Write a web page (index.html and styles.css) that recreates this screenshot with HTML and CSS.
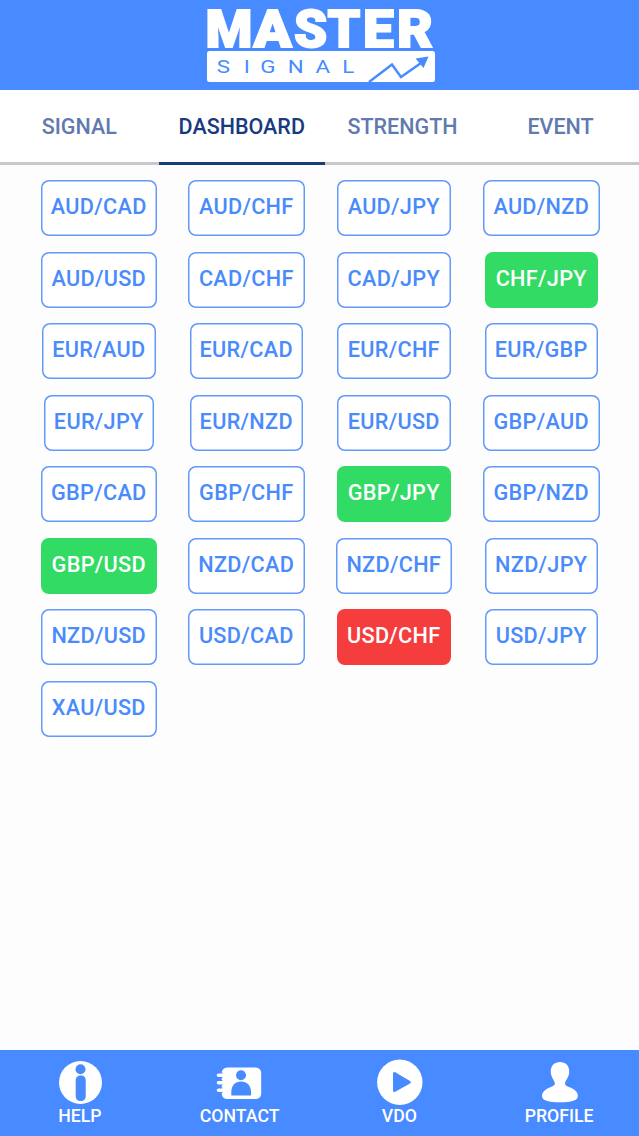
FILE: index.html
```html
<!DOCTYPE html>
<html lang="en">
<head>
    <meta charset="UTF-8">
    <meta name="viewport" content="width=device-width, initial-scale=1.0">
    <title>Master Signal</title>
    <link rel="stylesheet" href="styles.css">
</head>
<body>
    <!-- Header logo -->
    <div class="header">
        <svg class="logo" width="228" height="90" viewBox="0 -8 228 90">
            <rect x="0" y="43" width="228" height="31" rx="2.5" fill="#fff"/>
            <g class="logo-master">
                <text transform="translate(-1.500 38.500) scale(1.03 1)">M</text>
                <text transform="translate(46.500 38.500) scale(1.08 1)">A</text>
                <text transform="translate(87 38.500) scale(1.02 1)">S</text>
                <text transform="translate(120.500 38.500) scale(1 1)">T</text>
                <text transform="translate(156 38.500) scale(1.06 1)">E</text>
                <text transform="translate(190 38.500) scale(1.06 1)">R</text>
            </g>
            <text class="logo-signal" transform="translate(0 64.8) scale(1.24 1)" x="7.8 29.700 43 65.200 87.500 109">SIGNAL</text>
            <path d="M162 74 L185 56.500 L194 69 L214 55" fill="none" stroke="#488aff" stroke-width="2.4"/>
            <path d="M208.500 50.500 L221.500 48.500 L216.500 60 Z" fill="#488aff"/>
        </svg>
    </div>

    <!-- Tabs -->
    <div class="tabs">
        <div class="tab tab-signal">SIGNAL</div>
        <div class="tab tab-dashboard active">DASHBOARD</div>
        <div class="tab tab-strength">STRENGTH</div>
        <div class="tab tab-event">EVENT</div>
    </div>

    <!-- Currency pairs -->
    <div class="pairs">
        <div class="pair">AUD/CAD</div>
        <div class="pair">AUD/CHF</div>
        <div class="pair medium">AUD/JPY</div>
        <div class="pair">AUD/NZD</div>
        <div class="pair">AUD/USD</div>
        <div class="pair">CAD/CHF</div>
        <div class="pair medium">CAD/JPY</div>
        <div class="pair medium buy">CHF/JPY</div>
        <div class="pair medium">EUR/AUD</div>
        <div class="pair medium">EUR/CAD</div>
        <div class="pair medium">EUR/CHF</div>
        <div class="pair medium">EUR/GBP</div>
        <div class="pair small">EUR/JPY</div>
        <div class="pair medium">EUR/NZD</div>
        <div class="pair medium">EUR/USD</div>
        <div class="pair">GBP/AUD</div>
        <div class="pair">GBP/CAD</div>
        <div class="pair">GBP/CHF</div>
        <div class="pair medium buy">GBP/JPY</div>
        <div class="pair">GBP/NZD</div>
        <div class="pair buy">GBP/USD</div>
        <div class="pair">NZD/CAD</div>
        <div class="pair">NZD/CHF</div>
        <div class="pair medium">NZD/JPY</div>
        <div class="pair">NZD/USD</div>
        <div class="pair">USD/CAD</div>
        <div class="pair medium sell">USD/CHF</div>
        <div class="pair medium">USD/JPY</div>
        <div class="pair">XAU/USD</div>
    </div>

    <!-- Bottom menu -->
    <div class="footer">
        <div class="menu-item">
            <svg width="48" height="48" viewBox="0 0 48 48">
                <circle cx="24.500" cy="24.500" r="21.500" fill="#fff"/>
                <circle cx="24.500" cy="11.200" r="5" fill="#488aff"/>
                <rect x="19.700" y="17.500" width="10" height="25.500" rx="4.500" fill="#488aff"/>
            </svg>
            <span>HELP</span>
        </div>
        <div class="menu-item">
            <svg width="48" height="48" viewBox="0 0 48 48">
                <rect x="5.700" y="9.500" width="39.500" height="31.500" rx="5.500" fill="#fff"/>
                <path d="M1.500 17.200H6.500M1.500 24.700H6.500M1.500 32.200H6.500" stroke="#488aff" stroke-width="5.500"/>
                <path d="M2.500 17.200H8M2.500 24.700H8M2.500 32.200H8" stroke="#fff" stroke-width="3.600" stroke-linecap="round"/>
                <circle cx="25" cy="17.200" r="5" fill="#488aff"/>
                <path d="M15.300 37.500V34C15.300 27.500 19.500 23.500 25 23.500S35 27.500 35 34V37.500Z" fill="#488aff"/>
            </svg>
            <span>CONTACT</span>
        </div>
        <div class="menu-item">
            <svg width="48" height="48" viewBox="0 0 48 48">
                <circle cx="24.800" cy="24.300" r="22.700" fill="#fff"/>
                <path d="M19.500 15.500V32.500L34.300 24.300Z" fill="#488aff" stroke="#488aff" stroke-width="3" stroke-linejoin="round"/>
            </svg>
            <span>VDO</span>
        </div>
        <div class="menu-item">
            <svg width="48" height="48" viewBox="0 0 48 48">
                <path d="M25 4C30.500 4 34.500 7.500 34.200 14C34 19 31.200 21.500 30.200 24.500C29.500 27.300 31.700 28.200 35.200 29.500C39.700 31.200 42.900 34 42.900 38C42.900 42.500 36.700 44.300 25 44.300S7 42.500 7 38C7 34 10.200 31.200 14.700 29.500C18.200 28.200 20.400 27.300 19.700 24.500C18.700 21.500 16 19 15.800 14C15.500 7.500 19.500 4 25 4Z" fill="#fff"/>
            </svg>
            <span>PROFILE</span>
        </div>
    </div>
</body>
</html>
```

FILE: styles.css
```css
* {
    box-sizing: border-box;
}
body {
    font-family: Roboto, sans-serif;
    font-weight: 500;
    margin: 0;
    background-color: #fdfdfd;
    display: flex;
    flex-direction: column;
    height: 100vh;
}
.header {
    height: 90px;
    flex-shrink: 0;
    display: flex;
    justify-content: center;
    padding-left: 2px;
    background-color: #488aff;
}
.logo {
    overflow: visible;
}
.logo-master {
    font-size: 52px;
    font-weight: 900;
    fill: #fff;
    stroke: #fff;
    stroke-width: 1.8px;
}
.logo-signal {
    font-size: 18px;
    font-weight: 400;
    fill: #488aff;
}
/* Tabs */
.tabs {
    display: flex;
    height: 75px;
    flex-shrink: 0;
    background-color: #fff;
}
.tab {
    display: flex;
    justify-content: center;
    align-items: center;
    border-bottom: 3px solid #c8c8cb;
    font-size: 21.5px;
    color: #6179ae;
}
.tab-signal {
    width: 158.5px;
}
.tab-dashboard {
    width: 166.5px;
}
.tab-strength {
    width: 155px;
}
.tab-event {
    width: 159px;
    padding-left: 2px;
}
.tab.active {
    color: #183b80;
    border-bottom-color: #183b80;
}
/* Currency pairs */
.pairs {
    display: grid;
    grid-template-columns: repeat(4, 147.5px);
    grid-auto-rows: 56px;
    row-gap: 15.5px;
    justify-items: center;
    align-content: start;
    flex: 1;
    padding: 15px 0 0 25px;
}
.pair {
    display: flex;
    justify-content: center;
    align-items: center;
    width: 116.5px;
    padding-bottom: 3px;
    border-radius: 8px;
    background-color: #fff;
    box-shadow: inset 0 0 0 1.5px #6299fb;
    color: #4a8bfb;
    font-size: 21.7px;
    letter-spacing: 0.3px;
}
.pair.medium {
    width: 113.5px;
}
.pair.small {
    width: 110.5px;
}
.pair.buy {
    background-color: #32db64;
    box-shadow: none;
    color: #fff;
}
.pair.sell {
    background-color: #f53d3d;
    box-shadow: none;
    color: #fff;
}
/* Bottom menu */
.footer {
    display: grid;
    grid-template-columns: repeat(4, 1fr);
    height: 86.5px;
    flex-shrink: 0;
    background-color: #488aff;
}
.menu-item {
    display: flex;
    flex-direction: column;
    align-items: center;
    padding-top: 8.5px;
    color: #fff;
    font-size: 17.7px;
    line-height: 21px;
}
```
